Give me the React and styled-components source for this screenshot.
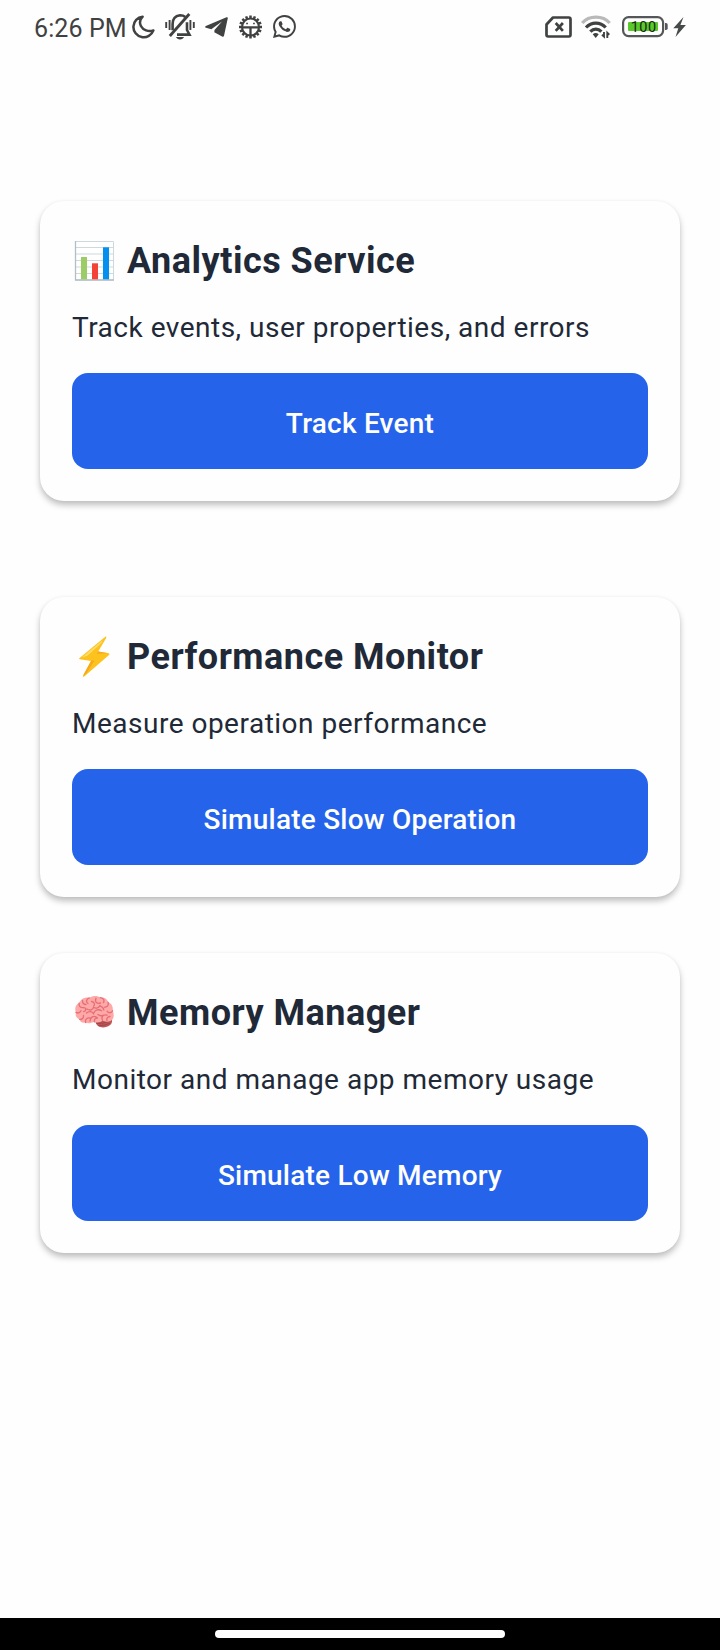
import React from "react";
import styled, { createGlobalStyle } from "styled-components";
import { BsWhatsapp } from "react-icons/bs";

const GlobalStyle = createGlobalStyle`
  * { box-sizing: border-box; }
  body { margin: 0; background: #fefefe; font-family: Roboto, sans-serif; }
`;

const Screen = styled.div`
  display: flex;
  flex-direction: column;
  width: 720px;
  height: 1650px;
  background: #fefefe;
`;

const StatusBar = styled.header`
  display: flex;
  align-items: center;
  justify-content: space-between;
  height: 53px;
  padding: 0 34px;
  color: #404141;
`;

const StatusGroup = styled.div`
  display: flex;
  align-items: center;
  gap: ${(p) => p.$gap}px;

  svg { display: block; flex: none; }
`;

const Clock = styled.span`
  width: 87px;
  font-size: 25px;
  line-height: 30px;
  letter-spacing: 0.1px;
  margin-top: 4px;
  white-space: nowrap;
`;

const Content = styled.main`
  flex: 1;
  display: flex;
  flex-direction: column;
  padding: 148px 40px 0;
`;

const Card = styled.section`
  display: flex;
  flex-direction: column;
  height: 300px;
  padding: 32px;
  margin-bottom: ${(p) => p.$after}px;
  border-radius: 24px;
  background: #fefefe;
  box-shadow: 0 4px 6px rgba(0, 0, 0, 0.25), 0 0 3px rgba(0, 0, 0, 0.04);
`;

const Title = styled.h2`
  display: flex;
  align-items: center;
  gap: 11px;
  height: 56px;
  margin: 0;
  font-size: 36px;
  font-weight: 700;
  letter-spacing: 0.5px;
  color: #1f2937;
  white-space: nowrap;

  svg { display: block; flex: none; }
`;

const Description = styled.p`
  margin: 17px 0 0;
  height: 67px;
  font-size: 28px;
  line-height: 44px;
  letter-spacing: 0.5px;
  color: #1f2937;
  white-space: nowrap;
`;

const Button = styled.button`
  height: 96px;
  padding: 5px 0 0;
  border: 0;
  border-radius: 16px;
  background: #2563eb;
  color: #fff;
  font: 500 28px Roboto, sans-serif;
  letter-spacing: 0.22px;
`;

const NavigationBar = styled.footer`
  display: flex;
  justify-content: center;
  height: 32px;
  padding-top: 12px;
  background: #000;
`;

const HomeHandle = styled.div`
  width: 290px;
  height: 8px;
  border-radius: 4px;
  background: #fff;
`;

const MoonIcon = () => (
  <svg width="24" height="24" viewBox="0 0 24 24" fill="none" stroke="currentColor" strokeWidth="2.5" strokeLinejoin="round">
    <path d="M11.600 1.700A10.300 10.300 0 1 0 22.400 15.400C17.500 17.200 12 15.100 9.900 11 8.400 8 9 4.400 11.600 1.700Z" />
  </svg>
);

const MutedBellIcon = () => (
  <svg width="30" height="27" viewBox="0 0 30 27" fill="none" stroke="currentColor" strokeWidth="2.600">
    <path d="M1.200 9v6M4.600 7v10M25.400 7v10M28.800 9v6" strokeWidth="1.900" />
    <path d="M7.600 17.200V11C7.600 5.800 10.300 3 15 2.300c2.200 0 4 .6 5.300 1.700M22 9.300V17l2.500 4.600H12" />
    <path d="M24.300 1 4.800 23" strokeWidth="2.800" />
    <path d="M11 24h8c-.7 1.600-2 2.400-4 2.400S11.700 25.600 11 24Z" fill="currentColor" stroke="none" />
  </svg>
);

const PlaneIcon = () => (
  <svg width="24" height="20" viewBox="0 0 24 20" fill="currentColor">
    <path d="M21.500.3.800 9.100c-1 .5-.8 1.400.2 1.700l5.300 1.500L17 4.500 9.500 13l-.2 2.200 7.800 4.400c1 .5 1.700.1 1.900-.9L22.800 1.300c.2-.9-.4-1.400-1.300-1Z" />
  </svg>
);

const teeth = Array.from({ length: 16 }, (_, i) => i * 22.5);

const GearIcon = () => (
  <svg width="24" height="24" viewBox="0 0 24 24" fill="none" stroke="currentColor">
    <circle cx="11.500" cy="12" r="8.500" strokeWidth="2.200" />
    {teeth.map((a) => (
      <path key={a} d="M11.500.5v2.800" strokeWidth="2.500" transform={`rotate(${a} 11.500 12)`} />
    ))}
    <path d="M3 12.300h17M11.500 12.300v8.500" strokeWidth="2.300" />
    <path d="M7.200 8.600h1.700M14.100 8.600h1.700" strokeWidth="1.500" />
  </svg>
);

const NoSimIcon = () => (
  <svg width="27" height="22" viewBox="0 0 27 22" fill="none" stroke="currentColor" strokeLinejoin="round">
    <path d="M8 1.500h15.800q1.700 0 1.700 1.700v15.600q0 1.700-1.700 1.700H3.200q-1.700 0-1.700-1.700V8.500Z" strokeWidth="2.700" />
    <path d="m10.700 7 7.200 7.800M17.900 7l-7.200 7.800" strokeWidth="2.700" />
  </svg>
);

const WifiIcon = () => (
  <svg width="32" height="24" viewBox="0 0 32 24" fill="none" stroke="currentColor" strokeWidth="3.200">
    <path d="M1.200 8C8 .1 21.800.1 28.700 8" stroke="#b9b9b9" />
    <path d="M5 12.500c5.400-5.800 14.300-5.800 19.700 0" />
    <path d="M9.300 16.700c3.300-3.400 7.800-3.400 11.100 0" />
    <path d="M11.700 19.300q3-2.600 6 0l-3 3.700Z" fill="currentColor" stroke="none" />
    <path d="M23 17v4.500l-2-1.800M26.300 23v-5.200l2 1.900" strokeWidth="1.900" />
  </svg>
);

const BatteryIcon = () => (
  <svg width="46" height="22" viewBox="0 0 46 22">
    <rect x="1.100" y="1.100" width="40" height="19" rx="5.500" fill="none" stroke="#555657" strokeWidth="2.200" />
    <path d="M43 7h1q1.700 0 1.700 1.700v3.600q0 1.700-1.700 1.700h-1Z" fill="#555657" />
    <rect x="6" y="6" width="30" height="9" rx="1" fill="#5bc82c" />
    <text x="21.700" y="15.600" textAnchor="middle" fontFamily="Roboto, sans-serif" fontSize="14.500" letterSpacing=".5" fill="#152b0e">100</text>
  </svg>
);

const ChargingIcon = () => (
  <svg width="13" height="20" viewBox="0 0 13 20" fill="#484949">
    <path d="M10.500 0 .3 11.200h5L2.500 20 12.900 8H7.400Z" />
  </svg>
);

const ChartEmoji = () => (
  <svg width="44" height="42" viewBox="0 0 44 42">
    <path d="M3.500 1.500h38v38.500h-38Z" fill="#fff" />
    <path d="M3 7.500h39M3 14h39M3 20.500h39M3 27h39M3 33.500h39" stroke="#cfd8dc" strokeWidth="1" />
    <path d="M3.500 1.500h38v38.500h-38Z" fill="none" stroke="#cfd8dc" />
    <path d="M3.500 1v39H42" fill="none" stroke="#b0bec5" strokeWidth="1.300" />
    <path d="M9 17h6v22.300H9Z" fill="#9ccc65" />
    <path d="M20 23.300h6v16h-6Z" fill="#f44336" />
    <path d="M31 7.300h6v32h-6Z" fill="#0390ef" />
  </svg>
);

const BoltEmoji = () => (
  <svg width="44" height="42" viewBox="0 0 44 42">
    <path d="M33.300.700 7.300 22.200q-.7 1 .5 1.100L19.200 25 11 39.800q-.3 1.500 1.200.6L37.300 18.700q.7-1.300-.7-1.500L26.200 15.600 34.300 1.800q.3-1.500-1-1.100Z" fill="#fdc21e" />
    <path d="M30.500 4.300 9.800 21.500l5.500-1.700L29.500 7Z" fill="#ffdc67" />
    <path d="M22.500 24.500h-3.300L11 39.800l3-1.700ZM36.600 17.200l-10.400-1.600-1.700 2.200Z" fill="#f5a91b" />
  </svg>
);

const BrainEmoji = () => (
  <svg width="44" height="42" viewBox="0 -1 44 42">
    <path d="M23.500 29c1 4.700 6 6.500 11.300 4.800 4.300-1.300 5.600-4 5.200-7.300Z" fill="#bd5656" />
    <path d="M24.500 30.500q7 .5 14-3M26.500 32.500q6 .5 11-2.200" fill="none" stroke="#8f3e43" strokeWidth=".7" />
    <path d="M13.700 29.500c-3.200.7-5.500-.6-6-3.100-3.300-.9-4.700-4.200-3.700-7-2-4 .1-8.300 3.200-9.300C8.700 6 13.500 3.700 17.300 4.900c3.600-2.700 8.600-2.500 10.900-.3 4.200-.9 7.500 1.700 7.800 4.500 3.800 1.400 5.500 5.100 4.600 8.700 1.900 3.300 1.400 8-1.400 9.800-3 2-6.700 1-8.500-.1-2.700 2.300-6.500 2.300-8.700 1.200-3 1.700-6.500 1.900-8.300.8Z" fill="#ffa8a8" />
    <path d="M17.300 4.900c-3 1-3.700 4.300-1.300 5.600M10.500 7.500c0 2.500 1.500 4 3.500 4M7.200 10.100c-.5 3 1.200 4.800 4 4.500 3.300-.4 3.300 3.400.5 4M4 19.400c2.500 1.500 4.300-.2 5-1.600M7.700 26.400c2.500.2 4-1.500 3.800-3.900M19.500 8.500c2.800.7 3.600 2.500 2.300 4.500M24 5.300c-1.600 3.500 1 6 4.500 4.700M28.200 4.600c3.800.3 4.300 3 3.300 5M36 9.100c1.100 3.200-1 5-3.400 5.100M15 16c3.300 2 5.700.7 6.500-1.600 2.700 1.500 5.500.3 6.300-1.700 2 1 4 2.200 4 4.400M14.500 20c2.500-2.200 5.500-1.700 7 .5 1.500-3.800 5-4.800 8-2.700M40.600 17.800c-1.300 2.800-4.200 2.300-5.500.4M13.700 29.500c-1-3 1.400-5.200 4.300-4.500M18 28c.3-4 3.500-6 7-3.500M22.500 28.800c-.5-2.500 1-4 3-3.800M30.700 27.500c-1.900-3.200.4-6.500 4.300-5.300M35 27.500c-.7-2 .5-3.700 3-4M26 21.500q2.400 2 5 .8" fill="none" stroke="#e56f75" strokeWidth="1.350" strokeLinecap="round" />
  </svg>
);

const services = [
  { icon: ChartEmoji, title: "Analytics Service", description: "Track events, user properties, and errors", action: "Track Event", after: 96 },
  { icon: BoltEmoji, title: "Performance Monitor", description: "Measure operation performance", action: "Simulate Slow Operation", after: 56 },
  { icon: BrainEmoji, title: "Memory Manager", description: "Monitor and manage app memory usage", action: "Simulate Low Memory", after: 0 },
];

export default function App() {
  return (
    <Screen>
      <GlobalStyle />
      <StatusBar>
        <StatusGroup $gap={10}>
          <Clock>6:26 PM</Clock>
          <MoonIcon />
          <MutedBellIcon />
          <PlaneIcon />
          <GearIcon />
          <BsWhatsapp size={23} />
        </StatusGroup>
        <StatusGroup $gap={9}>
          <NoSimIcon />
          <WifiIcon />
          <StatusGroup $gap={5}>
            <BatteryIcon />
            <ChargingIcon />
          </StatusGroup>
        </StatusGroup>
      </StatusBar>
      <Content>
        {services.map(({ icon: Icon, title, description, action, after }) => (
          <Card key={title} $after={after}>
            <Title><Icon />{title}</Title>
            <Description>{description}</Description>
            <Button>{action}</Button>
          </Card>
        ))}
      </Content>
      <NavigationBar><HomeHandle /></NavigationBar>
    </Screen>
  );
}
